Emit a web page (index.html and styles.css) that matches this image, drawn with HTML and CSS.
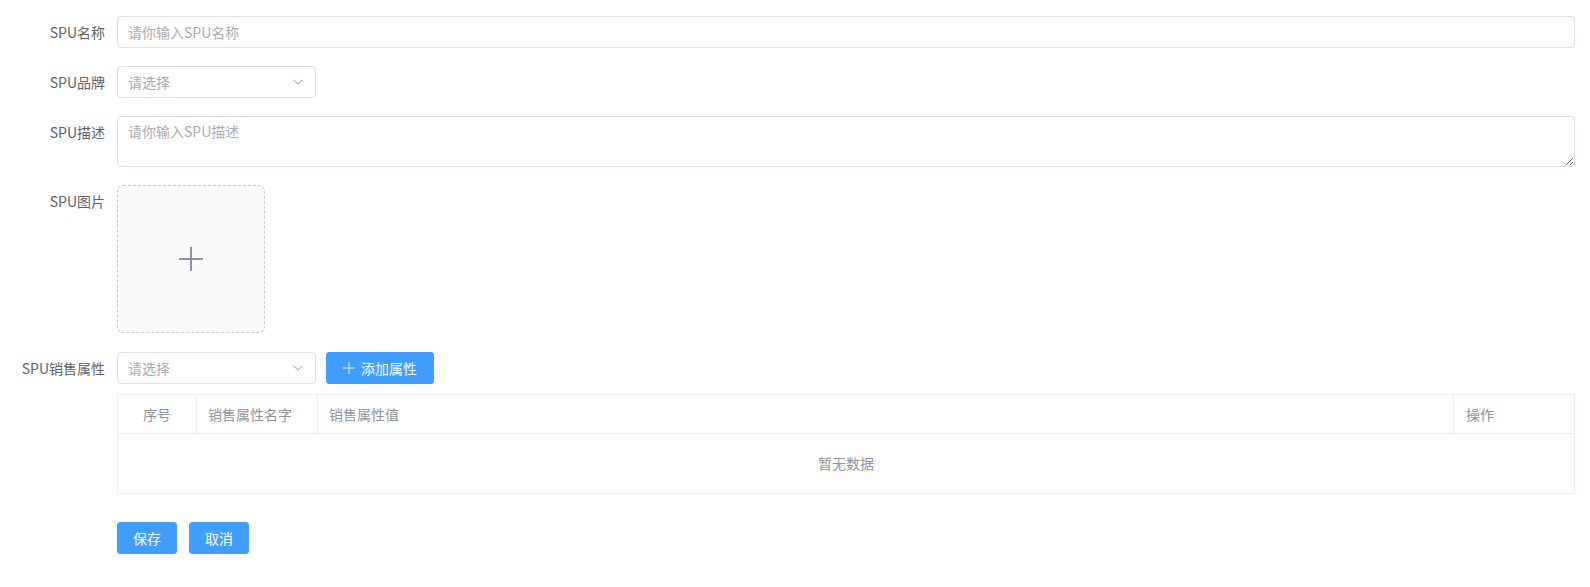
FILE: index.html
```html
<!DOCTYPE html>
<html lang="zh-CN">
<head>
<meta charset="utf-8">
<title>SPU</title>
<link rel="stylesheet" href="styles.css">
</head>
<body>
<form class="form">
  <div class="item">
    <label class="label">SPU名称</label>
    <div class="content">
      <input class="input" type="text" placeholder="请你输入SPU名称">
    </div>
  </div>
  <div class="item">
    <label class="label">SPU品牌</label>
    <div class="content">
      <div class="select">
        <span class="select-ph">请选择</span>
        <svg class="arrow" width="10" height="6" viewBox="0 0 10 6"><path d="M0.5 0.8 L5 5 L9.5 0.8" fill="none" stroke="#b4b7bd" stroke-width="1.1"/></svg>
      </div>
    </div>
  </div>
  <div class="item">
    <label class="label">SPU描述</label>
    <div class="content">
      <textarea class="textarea" rows="2" placeholder="请你输入SPU描述"></textarea>
    </div>
  </div>
  <div class="item item-upload">
    <label class="label">SPU图片</label>
    <div class="content">
      <div class="upload">
        <svg width="24" height="24" viewBox="0 0 24 24"><path d="M12 0 V24 M0 12 H24" stroke="#8c939d" stroke-width="2"/></svg>
      </div>
    </div>
  </div>
  <div class="item item-attr">
    <label class="label">SPU销售属性</label>
    <div class="content">
      <div class="attr-row">
        <div class="select">
          <span class="select-ph">请选择</span>
          <svg class="arrow" width="10" height="6" viewBox="0 0 10 6"><path d="M0.5 0.8 L5 5 L9.5 0.8" fill="none" stroke="#b4b7bd" stroke-width="1.1"/></svg>
        </div>
        <button type="button" class="btn btn-add">
          <svg width="12" height="12" viewBox="0 0 12 12"><path d="M6 0 V12 M0 6 H12" stroke="rgba(255,255,255,0.6)" stroke-width="1.4"/></svg>
          <span>添加属性</span>
        </button>
      </div>
      <div class="table">
        <div class="th th-center">序号</div>
        <div class="th">销售属性名字</div>
        <div class="th">销售属性值</div>
        <div class="th th-last">操作</div>
        <div class="empty">暂无数据</div>
      </div>
    </div>
  </div>
  <div class="item item-actions">
    <div class="label"></div>
    <div class="content actions">
      <button type="button" class="btn">保存</button>
      <button type="button" class="btn">取消</button>
    </div>
  </div>
</form>
</body>
</html>
```

FILE: styles.css
```css
* { box-sizing: border-box; }
body {
  margin: 0;
  background: #fff;
  font-family: "Noto Sans CJK SC", "Noto Sans", sans-serif;
  font-size: 14px;
  color: #606266;
}
.form {
  padding: 16px 15px 0 0;
}
.item {
  display: flex;
  margin-bottom: 18px;
}
.label {
  flex: 0 0 117px;
  width: 117px;
  padding-right: 12px;
  text-align: right;
  line-height: 32px;
  font-size: 14px;
  color: #606266;
}
.content {
  flex: 1;
  min-width: 0;
}
.input {
  display: block;
  width: 100%;
  height: 32px;
  border: 1px solid #dcdfe6;
  border-radius: 4px;
  padding: 0 10px;
  font-family: inherit;
  font-size: 14px;
  color: #606266;
  outline: none;
}
.input::placeholder, .textarea::placeholder { color: #a8abb2; }
.select {
  width: 199px;
  height: 32px;
  border: 1px solid #dcdfe6;
  border-radius: 4px;
  padding: 0 11px 0 10px;
  display: flex;
  align-items: center;
  justify-content: space-between;
}
.select-ph {
  color: #a8abb2;
  font-size: 14px;
  line-height: 30px;
}
.arrow { margin-right: 1px; }
.textarea {
  display: block;
  width: 100%;
  height: 51px;
  border: 1px solid #dcdfe6;
  border-radius: 4px;
  padding: 4px 10px;
  font-family: inherit;
  font-size: 14px;
  line-height: 21px;
  color: #606266;
  resize: vertical;
  outline: none;
}
.item-upload { margin-bottom: 19px; }
.upload {
  width: 148px;
  height: 148px;
  border: 1px dashed #c8cbd2;
  border-radius: 6px;
  background: #fafafa;
  display: flex;
  align-items: center;
  justify-content: center;
}
.attr-row {
  display: flex;
  gap: 10px;
  align-items: center;
}
.btn {
  height: 32px;
  padding: 0 16px;
  border: 1px solid #409eff;
  border-radius: 3px;
  background: #409eff;
  color: #fff;
  font-family: inherit;
  font-size: 14px;
  line-height: 30px;
  display: inline-flex;
  align-items: center;
  justify-content: center;
}
.btn-add {
  width: 108px;
  gap: 6px;
  padding: 0 14px;
}
.table {
  margin-top: 10px;
  display: grid;
  grid-template-columns: 79px 121px 1fr 120px;
  border: 1px solid #ebeef5;
}
.th {
  height: 39px;
  line-height: 38px;
  padding-left: 11px;
  border-right: 1px solid #ebeef5;
  border-bottom: 1px solid #ebeef5;
  color: #909399;
  font-size: 14px;
}
.th-center { text-align: center; padding-left: 0; }
.th-last { border-right: none; padding-left: 12px; }
.empty {
  grid-column: 1 / -1;
  height: 59px;
  line-height: 59px;
  text-align: center;
  color: #909399;
  font-size: 14px;
}
.item-actions { margin-top: 28px; }
.actions {
  display: flex;
  gap: 12px;
}
.actions .btn { width: 60px; padding: 0; }
```
